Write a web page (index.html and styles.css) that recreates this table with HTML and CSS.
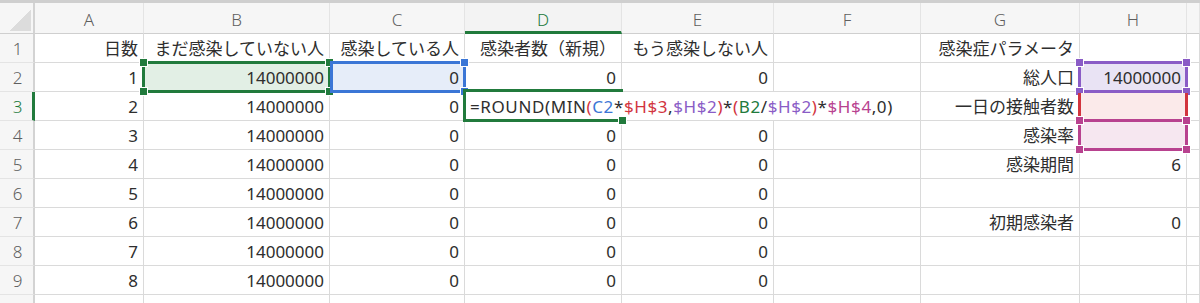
FILE: index.html
```html
<!DOCTYPE html>
<html lang="ja">
<head>
<meta charset="utf-8">
<title>感染シミュレーション</title>
<link rel="stylesheet" href="styles.css">
</head>
<body>
<div class="topband"></div>
<div class="sheet">
  <div class="corner"></div>
  <div class="ch">A</div><div class="ch">B</div><div class="ch">C</div><div class="ch ch-sel">D</div><div class="ch">E</div><div class="ch">F</div><div class="ch">G</div><div class="ch">H</div><div class="ch"></div>

  <div class="rh">1</div>
  <div class="c">日数</div><div class="c">まだ感染していない人</div><div class="c">感染している人</div><div class="c">感染者数（新規）</div><div class="c">もう感染しない人</div><div class="c"></div><div class="c">感染症パラメータ</div><div class="c"></div><div class="c"></div>

  <div class="rh">2</div>
  <div class="c">1</div>
  <div class="c hl"><span class="sel sel-green"><i class="h tl"></i><i class="h tr"></i><i class="h bl"></i><i class="h br"></i></span><span class="v">14000000</span></div>
  <div class="c hl"><span class="sel sel-blue"><i class="h tr"></i><i class="h br"></i></span><span class="v">0</span></div>
  <div class="c">0</div><div class="c">0</div><div class="c"></div><div class="c">総人口</div>
  <div class="c hl hl-top"><span class="sel sel-purple"><i class="h tl"></i><i class="h tr"></i><i class="h bl"></i><i class="h br"></i></span><span class="v">14000000</span></div>
  <div class="c"></div>

  <div class="rh rh-sel">3</div>
  <div class="c">2</div><div class="c">14000000</div><div class="c">0</div>
  <div class="c editcell"><span class="editor"><span class="k">=ROUND(MIN</span><span class="fr">(</span><span class="fb">C2</span><span class="k">*</span><span class="fr">$H$3</span><span class="k">,</span><span class="fp">$H$2</span><span class="fr">)</span><span class="k">*</span><span class="fr">(</span><span class="fg">B2</span><span class="k">/</span><span class="fp">$H$2</span><span class="fr">)</span><span class="k">*</span><span class="fm">$H$4</span><span class="k">,0)</span></span><span class="frame"><i class="h br"></i></span></div>
  <div class="c"></div><div class="c"></div><div class="c">一日の接触者数</div>
  <div class="c hl"><span class="sel sel-red"></span></div>
  <div class="c"></div>

  <div class="rh">4</div>
  <div class="c">3</div><div class="c">14000000</div><div class="c">0</div><div class="c">0</div><div class="c">0</div><div class="c"></div><div class="c">感染率</div>
  <div class="c hl"><span class="sel sel-magenta"><i class="h tl"></i><i class="h tr"></i><i class="h bl"></i><i class="h br"></i></span></div>
  <div class="c"></div>

  <div class="rh">5</div>
  <div class="c">4</div><div class="c">14000000</div><div class="c">0</div><div class="c">0</div><div class="c">0</div><div class="c"></div><div class="c">感染期間</div><div class="c">6</div><div class="c"></div>

  <div class="rh">6</div>
  <div class="c">5</div><div class="c">14000000</div><div class="c">0</div><div class="c">0</div><div class="c">0</div><div class="c"></div><div class="c"></div><div class="c"></div><div class="c"></div>

  <div class="rh">7</div>
  <div class="c">6</div><div class="c">14000000</div><div class="c">0</div><div class="c">0</div><div class="c">0</div><div class="c"></div><div class="c">初期感染者</div><div class="c">0</div><div class="c"></div>

  <div class="rh">8</div>
  <div class="c">7</div><div class="c">14000000</div><div class="c">0</div><div class="c">0</div><div class="c">0</div><div class="c"></div><div class="c"></div><div class="c"></div><div class="c"></div>

  <div class="rh">9</div>
  <div class="c">8</div><div class="c">14000000</div><div class="c">0</div><div class="c">0</div><div class="c">0</div><div class="c"></div><div class="c"></div><div class="c"></div><div class="c"></div>

  <div class="rh">10</div>
  <div class="c">9</div><div class="c">14000000</div><div class="c">0</div><div class="c">0</div><div class="c">0</div><div class="c"></div><div class="c"></div><div class="c"></div><div class="c"></div>
</div>
</body>
</html>
```

FILE: styles.css
```css
html, body {
  margin: 0;
  padding: 0;
  background: #ffffff;
  overflow: hidden;
}
body {
  width: 1200px;
  height: 303px;
  font-family: "Noto Sans", "Noto Sans CJK JP", sans-serif;
  font-size: 17px;
  color: #2e2e2e;
}
.topband {
  height: 3px;
  background: #cfcfcf;
}
.sheet {
  display: grid;
  grid-template-columns: 35px 109px 186px 135px 157px 152px 147px 159px 107px 13px;
  grid-template-rows: 31px;
  grid-auto-rows: 29px;
  height: 300px;
  overflow: hidden;
}
.corner, .ch, .rh, .c {
  box-sizing: border-box;
  border-right: 1px solid #dadada;
  border-bottom: 1px solid #dadada;
  display: flex;
  align-items: center;
  white-space: nowrap;
  line-height: 1;
}
.corner {
  background: #f6f6f6;
  position: relative;
  border-right: 2px solid #d3d3d3;
  border-bottom: 1px solid #cfcfcf;
}
.corner::after {
  content: "";
  position: absolute;
  right: 2px;
  bottom: 2px;
  width: 22px;
  height: 21px;
  background: linear-gradient(to bottom right, transparent 50%, #dcdcdc 50%);
}
.ch {
  background: #f6f6f6;
  justify-content: center;
  color: #5f5f5f;
  font-weight: 300;
  border-right-color: #e4e4e4;
  border-bottom: 1px solid #cfcfcf;
  padding-top: 2px;
}
.ch-sel {
  color: #217a3c;
  border-bottom: 3px solid #217a3c;
  padding-top: 4px;
  background: #f3f3f3;
}
.rh {
  background: #f6f6f6;
  justify-content: center;
  color: #5f5f5f;
  font-weight: 300;
  border-right: 2px solid #d3d3d3;
  border-bottom-color: #e4e4e4;
  padding-left: 2px;
}
.rh-sel {
  color: #217a3c;
  border-right: 3px solid #217a3c;
  padding-left: 3px;
}
.c {
  justify-content: flex-end;
  padding: 0 5px 0 4px;
  position: relative;
}
.hl .v {
  position: relative;
  z-index: 3;
}

/* selection overlays */
.sel {
  position: absolute;
  box-sizing: border-box;
  left: -2px;
  right: -2px;
  top: -2px;
  bottom: -2px;
  border: 3px solid;
  z-index: 2;
}
.sel-green { border-color: #217a3c; background: #e2efe5; }
.sel-blue { border-color: #3b76d6; background: #e6edf9; left: 0; }
.sel-purple { border-color: #8a5cc6; background: #e9e3f4; }
.sel-red { border-color: #d2343e; background: #fbeaea; top: 1px; bottom: 1px; border-top: 0; border-bottom: 0; }
.sel-magenta { border-color: #b8428f; background: #f6e7f0; }

.h {
  position: absolute;
  width: 7px;
  height: 7px;
  background: currentColor;
  box-shadow: 0 0 0 1px #ffffff;
}
.sel-green .h { color: #217a3c; }
.sel-blue .h { color: #3b76d6; }
.sel-purple .h { color: #8a5cc6; }
.sel-magenta .h { color: #b8428f; }
.tl { left: -5px; top: -5px; }
.tr { right: -5px; top: -5px; }
.bl { left: -5px; bottom: -5px; }
.br { right: -5px; bottom: -5px; }

/* formula edit cell */
.editcell {
  z-index: 4;
  justify-content: flex-start;
}
.editor {
  position: absolute;
  left: 0;
  top: 0;
  width: 455px;
  height: 28px;
  background: #ffffff;
  display: flex;
  align-items: center;
  padding-left: 5px;
  box-sizing: border-box;
  color: #2e2e2e;
  letter-spacing: 0.6px;
}
.frame {
  position: absolute;
  box-sizing: border-box;
  left: -2px;
  top: -3px;
  width: 160px;
  bottom: -2px;
  border: 3px solid #217a3c;
  border-right: 0;
  color: #217a3c;
}
.frame .br { right: -3px; bottom: -5px; }
.k { color: #2e2e2e; }
.fr { color: #d2343e; }
.fb { color: #3b76d6; }
.fp { color: #8a5cc6; }
.fg { color: #217a3c; }
.fm { color: #b8428f; }
```
